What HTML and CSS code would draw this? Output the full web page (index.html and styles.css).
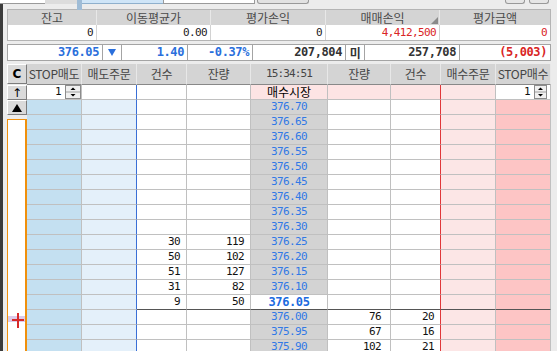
FILE: index.html
```html
<!DOCTYPE html>
<html lang="ko">
<head>
  <meta charset="UTF-8">
  <title>호가주문</title>
  <link rel="stylesheet" href="styles.css">
</head>
<body>

  <div class="topbar">
    <span class="tb-input"></span>
    <span class="tb-gray"></span>
    <span class="tb-tabs"><i></i><i></i><i></i><i></i><i></i></span>
    <span class="tb-field"></span>
    <span class="tb-btn"></span>
    <span class="tb-fill"></span>
    <span class="tb-small"></span>
    <span class="tb-small"></span>
  </div>

  <div class="main">
    <!-- 잔고 요약 -->
    <div class="summary">
      <div class="sh">잔고</div>
      <div class="sh">이동평균가</div>
      <div class="sh">평가손익</div>
      <div class="sh sort">매매손익</div>
      <div class="sh">평가금액</div>
      <div class="sv">0</div>
      <div class="sv">0.00</div>
      <div class="sv">0</div>
      <div class="sv red">4,412,500</div>
      <div class="sv red">0</div>
    </div>

    <!-- 현재가 -->
    <div class="quote">
      <div class="q q-price blue">376.05</div>
      <div class="q q-sign"><svg width="8" height="7" viewBox="0 0 8 7"><path d="M0 0H8L4 7Z" fill="#2a6fdc"/></svg></div>
      <div class="q q-diff blue">1.40</div>
      <div class="q q-rate blue">-0.37%</div>
      <div class="q q-vol">207,804</div>
      <div class="q q-sign q-kr">미</div>
      <div class="q q-amt">257,708</div>
      <div class="q q-pl red">(5,003)</div>
    </div>

    <!-- 호가창 -->
    <div class="book">
      <div class="side">
        <button class="side-btn btn-c">C</button>
        <button class="side-btn">↑</button>
        <button class="side-btn"><svg width="10" height="8" viewBox="0 0 10 8"><path d="M5 0L10 8H0Z" fill="#000"/></svg></button>
        <div class="side-panel">
          <div class="cursor-mark"></div>
        </div>
      </div>

      <div class="grid">
        <div class="row head">
          <span>STOP매도</span><span>매도주문</span><span>건수</span><span>잔량</span><span class="time">15:34:51</span><span>잔량</span><span>건수</span><span>매수주문</span><span>STOP매수</span>
        </div>
        <div class="row market">
          <span class="spin-cell">1<svg class="spin" width="16" height="14" viewBox="0 0 16 14"><rect x="0.5" y="0.5" width="15" height="13" fill="#f0f0f0" stroke="#8c8c8c"/><line x1="1" y1="7" x2="15" y2="7" stroke="#a0a0a0"/><path d="M8 2.5L10.5 5H5.5Z" fill="#000"/><path d="M5.5 9H10.5L8 11.5Z" fill="#000"/></svg></span><span></span><span></span><span></span><span class="market-label">매수시장</span><span></span><span></span><span></span><span class="spin-cell spin-right">1<svg class="spin" width="13" height="14" viewBox="0 0 13 14"><rect x="0.5" y="0.5" width="12" height="13" fill="#f0f0f0" stroke="#8c8c8c"/><line x1="1" y1="7" x2="12" y2="7" stroke="#a0a0a0"/><path d="M6.5 2.5L9 5H4Z" fill="#000"/><path d="M4 9H9L6.5 11.5Z" fill="#000"/></svg></span>
        </div>
        <div class="row"><span></span><span></span><span></span><span></span><span>376.70</span><span></span><span></span><span></span><span></span></div>
        <div class="row"><span></span><span></span><span></span><span></span><span>376.65</span><span></span><span></span><span></span><span></span></div>
        <div class="row"><span></span><span></span><span></span><span></span><span>376.60</span><span></span><span></span><span></span><span></span></div>
        <div class="row"><span></span><span></span><span></span><span></span><span>376.55</span><span></span><span></span><span></span><span></span></div>
        <div class="row"><span></span><span></span><span></span><span></span><span>376.50</span><span></span><span></span><span></span><span></span></div>
        <div class="row"><span></span><span></span><span></span><span></span><span>376.45</span><span></span><span></span><span></span><span></span></div>
        <div class="row"><span></span><span></span><span></span><span></span><span>376.40</span><span></span><span></span><span></span><span></span></div>
        <div class="row"><span></span><span></span><span></span><span></span><span>376.35</span><span></span><span></span><span></span><span></span></div>
        <div class="row"><span></span><span></span><span></span><span></span><span>376.30</span><span></span><span></span><span></span><span></span></div>
        <div class="row"><span></span><span></span><span>30</span><span>119</span><span>376.25</span><span></span><span></span><span></span><span></span></div>
        <div class="row"><span></span><span></span><span>50</span><span>102</span><span>376.20</span><span></span><span></span><span></span><span></span></div>
        <div class="row"><span></span><span></span><span>51</span><span>127</span><span>376.15</span><span></span><span></span><span></span><span></span></div>
        <div class="row"><span></span><span></span><span>31</span><span>82</span><span>376.10</span><span></span><span></span><span></span><span></span></div>
        <div class="row cur"><span></span><span></span><span>9</span><span>50</span><span>376.05</span><span></span><span></span><span></span><span></span></div>
        <div class="row"><span></span><span></span><span></span><span></span><span>376.00</span><span>76</span><span>20</span><span></span><span></span></div>
        <div class="row"><span></span><span></span><span></span><span></span><span>375.95</span><span>67</span><span>16</span><span></span><span></span></div>
        <div class="row"><span></span><span></span><span></span><span></span><span>375.90</span><span>102</span><span>21</span><span></span><span></span></div>
      </div>
    </div>
  </div>

</body>
</html>
```

FILE: styles.css
```css
body {
  margin: 0;
  background-color: #ececec;
  font-family: "Noto Sans CJK KR", "DejaVu Sans", sans-serif;
  font-size: 12px;
  color: #222;
  width: 557px;
  height: 351px;
  overflow: hidden;
}

/* 상단 툴바 (잘린 부분) */
.topbar {
  display: flex;
  height: 4px;
}

.topbar span {
  display: block;
  box-sizing: border-box;
}

.tb-input {
  width: 45px;
  background-color: #fff;
  border-bottom: 1px solid #9a9a9a;
}

.tb-gray {
  width: 32px;
  background-color: #dcdcdc;
}

.tb-tabs {
  width: 86px;
  display: flex;
  background-color: #cfe5f7;
  border-bottom: 1px solid #8fb0cc;
}

.tb-tabs i {
  flex: 1;
  border-right: 1px solid #9fbcd6;
}

.tb-field {
  width: 92px;
  background-color: #fff;
  border: 1px solid #9a9a9a;
  border-top: none;
}

.tb-btn {
  width: 52px;
  margin-left: 2px;
  background-color: #e2e2e2;
  border: 1px solid #999;
  border-top: none;
  border-radius: 0 0 3px 3px;
}

.tb-fill {
  flex: 1;
}

.tb-small {
  width: 20px;
  margin-left: 4px;
  background-color: #e6e6e6;
  border: 1px solid #999;
  border-top: none;
  border-radius: 0 0 3px 3px;
}

.tb-small:last-child {
  margin-right: 8px;
}

.main {
  border-left: 3px solid #3b3b3b;
  padding: 5px 0 0 4px;
  height: 347px;
  box-sizing: border-box;
}

/* 잔고 요약 */
.summary {
  display: grid;
  grid-template-columns: 89px 114px 115px 114px 110px;
  grid-template-rows: 15px 15px;
  width: 544px;
  box-sizing: border-box;
  border: 1px solid #b4b4b4;
}

.sh {
  position: relative;
  background-color: #d4d4d4;
  color: #4a4a4a;
  text-align: center;
  line-height: 15px;
  border-right: 1px solid #e8e8e8;
}

.sh:nth-child(5) {
  border-right: none;
}

.sort::after {
  content: "";
  position: absolute;
  right: 1px;
  bottom: 1px;
  border-style: solid;
  border-width: 0 0 7px 7px;
  border-color: transparent transparent #8a8a8a transparent;
}

.sv {
  background-color: #fff;
  text-align: right;
  padding-right: 3px;
  border-right: 1px solid #d2d2d2;
  font-family: "DejaVu Sans Mono", monospace;
  font-size: 11px;
  letter-spacing: -0.6px;
  line-height: 15px;
}

.sv:nth-child(10) {
  border-right: none;
}

/* 현재가 줄 */
.quote {
  display: flex;
  height: 17px;
  margin-top: 3px;
}

.q {
  box-sizing: border-box;
  height: 17px;
  margin-left: -1px;
  border: 1px solid #a4a4a4;
  background-color: #fff;
  text-align: right;
  padding-right: 3px;
  font-family: "DejaVu Sans Mono", monospace;
  font-size: 12px;
  font-weight: bold;
  letter-spacing: -0.4px;
  line-height: 15px;
  color: #333;
}

.q:first-child {
  margin-left: 0;
}

.q-price { width: 96px; }
.q-diff { width: 67px; }
.q-rate { width: 66px; }
.q-vol { width: 94px; }
.q-amt { width: 96px; }
.q-pl { width: 92px; }

.q-sign {
  width: 20px;
  padding: 0;
  display: flex;
  justify-content: center;
  align-items: center;
}

.q-kr {
  font-family: "Noto Sans CJK KR", sans-serif;
  font-size: 12px;
}

.red {
  color: #d92525;
}

.blue {
  color: #2a6fdc;
}

/* 호가창 */
.book {
  display: flex;
  margin-top: 3px;
}

.side {
  display: flex;
  flex-direction: column;
  width: 20px;
}

.side-btn {
  display: flex;
  justify-content: center;
  align-items: center;
  height: 15px;
  padding: 0;
  margin: 0;
  background-color: #dadada;
  border: 1px solid;
  border-color: #fff #7c7c7c #7c7c7c #fff;
  font-family: "DejaVu Sans", sans-serif;
  font-size: 12px;
  color: #000;
}

.btn-c {
  height: 20px;
  margin-bottom: 1px;
  font-weight: bold;
}

.side-panel {
  flex: 1;
  height: 240px;
  margin-top: 4px;
  background-color: #fff;
  border: 1px solid #f0900c;
  border-right-width: 2px;
  border-bottom: none;
}

.cursor-mark {
  position: relative;
  height: 6px;
  margin-top: 196px;
  background-color: #dccbea;
}

.cursor-mark::before,
.cursor-mark::after {
  content: "";
  position: absolute;
  background-color: #d82a2a;
}

.cursor-mark::before {
  left: 4px;
  top: 3px;
  width: 12px;
  height: 2px;
}

.cursor-mark::after {
  left: 9px;
  top: -3px;
  width: 2px;
  height: 15px;
}

.grid {
  width: 524px;
}

.row {
  display: grid;
  grid-template-columns: 55px 55px 50px 64px 77px 63px 50px 55px 55px;
  height: 15px;
}

.row > span {
  box-sizing: border-box;
  border-right: 1px solid #c0c0c0;
  border-bottom: 1px solid #c0c0c0;
  text-align: right;
  padding-right: 6px;
  font-family: "DejaVu Sans Mono", monospace;
  font-size: 11px;
  letter-spacing: -0.6px;
  line-height: 14px;
  white-space: nowrap;
  color: #111;
}

.row > span:nth-child(1) { background-color: #c4e0f1; }
.row > span:nth-child(2) { background-color: #e4f0fa; border-right-color: #3a6fd6; }
.row > span:nth-child(3),
.row > span:nth-child(4) { background-color: #fff; }
.row > span:nth-child(5) {
  background-color: #d3d3d3;
  color: #3079e6;
  text-align: center;
  padding-right: 0;
}
.row > span:nth-child(6) { background-color: #fff; padding-right: 9px; }
.row > span:nth-child(7) { background-color: #fff; border-right-color: #e0383a; }
.row > span:nth-child(8) { background-color: #fce6e6; }
.row > span:nth-child(9) { background-color: #fdc5c5; }

.row.head {
  height: 21px;
}

.row.head > span {
  background-color: #d4d4d4;
  border-right-color: #e8e8e8;
  border-bottom-color: #888;
  color: #454545;
  text-align: center;
  padding: 0;
  font-family: "Noto Sans CJK KR", sans-serif;
  font-size: 12px;
  letter-spacing: -0.3px;
  line-height: 20px;
}

.row.head > .time {
  font-family: "DejaVu Sans Mono", monospace;
  font-size: 11px;
  letter-spacing: -0.9px;
}

.row.market > span { background-color: #fff; }
.row.market > span:nth-child(5),
.row.market > span:nth-child(6),
.row.market > span:nth-child(7) { background-color: #fde4e4; }
.row.market > span:nth-child(8) { background-color: #fce6e6; }

.row.market > .market-label {
  color: #000;
  font-family: "Noto Sans CJK KR", sans-serif;
  font-size: 12px;
  letter-spacing: 0;
  line-height: 14px;
}

.spin-cell {
  display: flex;
  justify-content: flex-end;
  align-items: center;
  padding-right: 0 !important;
}

.spin {
  margin-left: 4px;
}

.spin-right {
  padding-right: 3px !important;
}

.row.cur > span:nth-child(n+3) {
  border-bottom-color: #555;
}

.row.cur > span:nth-child(5) {
  background-color: #fff;
  color: #1c6be0;
  font-size: 12px;
  font-weight: bold;
  letter-spacing: -0.4px;
}
```
